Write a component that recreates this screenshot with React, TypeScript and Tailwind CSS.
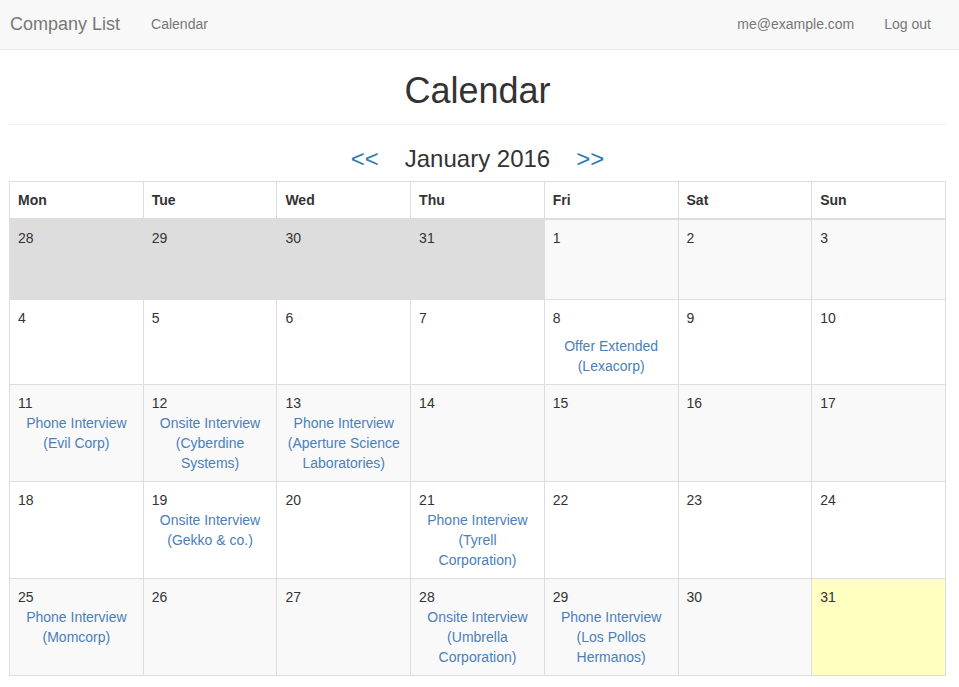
const FONT = "'Liberation Sans', Arial, 'Helvetica Neue', Helvetica, sans-serif";

type Day = {
  date: number;
  event?: string;
  gap?: boolean;
  outside?: boolean;
  today?: boolean;
};

const weekdays = ["Mon", "Tue", "Wed", "Thu", "Fri", "Sat", "Sun"];

const weeks: Day[][] = [
  [
    { date: 28, outside: true },
    { date: 29, outside: true },
    { date: 30, outside: true },
    { date: 31, outside: true },
    { date: 1 },
    { date: 2 },
    { date: 3 },
  ],
  [
    { date: 4 },
    { date: 5 },
    { date: 6 },
    { date: 7 },
    { date: 8, event: "Offer Extended (Lexacorp)", gap: true },
    { date: 9 },
    { date: 10 },
  ],
  [
    { date: 11, event: "Phone Interview (Evil Corp)" },
    { date: 12, event: "Onsite Interview (Cyberdine Systems)" },
    { date: 13, event: "Phone Interview (Aperture Science Laboratories)" },
    { date: 14 },
    { date: 15 },
    { date: 16 },
    { date: 17 },
  ],
  [
    { date: 18 },
    { date: 19, event: "Onsite Interview (Gekko & co.)" },
    { date: 20 },
    { date: 21, event: "Phone Interview (Tyrell Corporation)" },
    { date: 22 },
    { date: 23 },
    { date: 24 },
  ],
  [
    { date: 25, event: "Phone Interview (Momcorp)" },
    { date: 26 },
    { date: 27 },
    { date: 28, event: "Onsite Interview (Umbrella Corporation)" },
    { date: 29, event: "Phone Interview (Los Pollos Hermanos)" },
    { date: 30 },
    { date: 31, today: true },
  ],
];

function Navbar() {
  return (
    <nav className="flex h-[50px] items-center justify-between border-b border-[#e7e7e7] bg-[#f8f8f8]">
      <div className="flex items-center">
        <a className="pl-[10px] text-[18px] text-[#777]">Company List</a>
        <a className="pl-[31px] text-[14px] text-[#777]">Calendar</a>
      </div>
      <div className="flex items-center gap-[30px] pr-[28px] text-[14px] text-[#777]">
        <a>me@example.com</a>
        <a>Log out</a>
      </div>
    </nav>
  );
}

function DayCell({ day }: { day: Day }) {
  let bg = "";
  if (day.outside) bg = "bg-[#dddddd]";
  if (day.today) bg = "bg-[#ffffc2]";

  return (
    <td className={`border border-[#dddddd] p-2 align-top leading-5 ${bg}`}>
      <div>{day.date}</div>
      {day.event && (
        <div className={`text-center text-[#4a80ba] ${day.gap ? "mt-2" : ""}`}>
          {day.event}
        </div>
      )}
    </td>
  );
}

export default function App() {
  return (
    <div className="min-h-screen bg-white text-[14px] text-[#333]" style={{ fontFamily: FONT }}>
      <Navbar />

      <div className="pl-[9px] pr-[13px]">
        <div className="mt-[21px] border-b border-[#eeeeee] pb-[13px] text-center">
          <h1 className="text-[36px] leading-[40px] text-[#333]">Calendar</h1>
        </div>

        <div className="mt-[21px] mb-[9px] flex items-center justify-center gap-[26px] text-[24px] leading-[26px]">
          <a className="text-[#337ab7]">&lt;&lt;</a>
          <h3>January 2016</h3>
          <a className="text-[#337ab7]">&gt;&gt;</a>
        </div>

        <table className="w-full table-fixed border-collapse">
          <thead>
            <tr>
              {weekdays.map((d) => (
                <th
                  key={d}
                  className="border border-b-2 border-[#dddddd] p-2 text-left font-bold leading-5"
                >
                  {d}
                </th>
              ))}
            </tr>
          </thead>
          <tbody>
            {weeks.map((week, i) => (
              <tr key={i} className={`${i % 2 === 0 ? "bg-[#f9f9f9]" : "bg-white"} ${i === 0 ? "h-[80px]" : ""}`}>
                {week.map((day, j) => (
                  <DayCell key={j} day={day} />
                ))}
              </tr>
            ))}
          </tbody>
        </table>
      </div>
    </div>
  );
}
